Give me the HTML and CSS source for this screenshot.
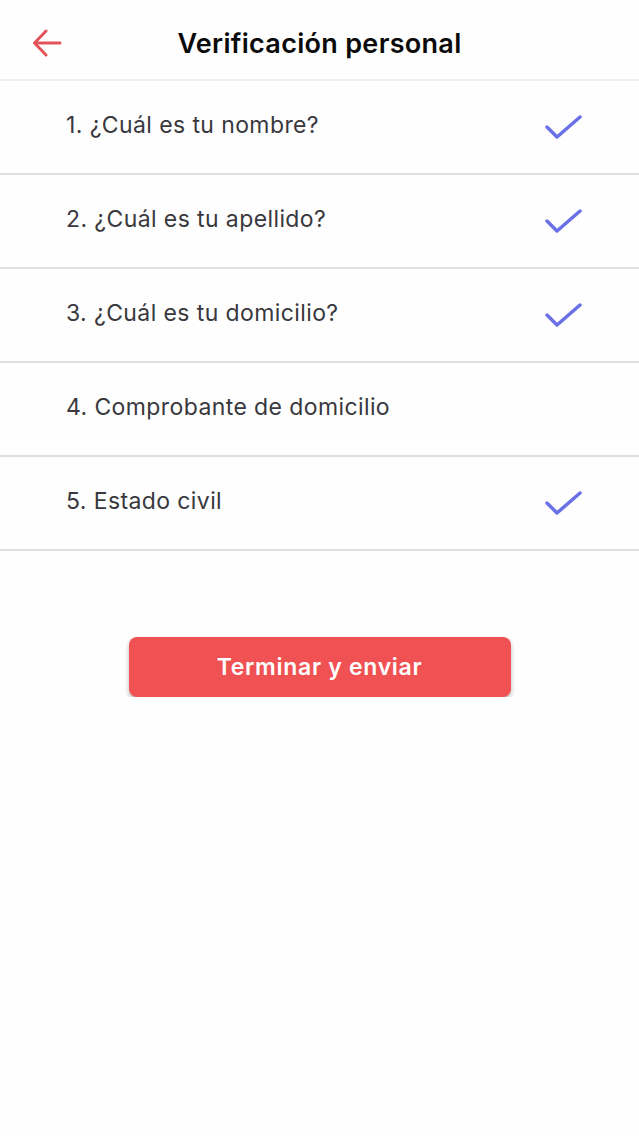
FILE: index.html
```html
<!DOCTYPE html>
<html lang="es">
<head>
    <meta charset="UTF-8">
    <meta name="viewport" content="width=device-width, initial-scale=1.0">
    <title>Verificación personal</title>
    <link rel="stylesheet" href="styles.css">
</head>
<body>
    <header class="top-bar">
        <a href="#" class="back-btn" aria-label="Volver">
            <svg width="30" height="28" viewBox="0 0 30 28" fill="none" stroke="#e2545a" stroke-width="3" stroke-linecap="round" stroke-linejoin="round">
                <path d="M28 14H3"/>
                <path d="M14 2L2.5 14L14 26"/>
            </svg>
        </a>
        <h1>Verificación personal</h1>
    </header>
    <ul class="steps">
        <li class="step">
            <span>1. ¿Cuál es tu nombre?</span>
            <svg class="check" width="38" height="28" viewBox="0 0 38 28" fill="none" stroke="#6a70e6" stroke-width="3.5" stroke-linecap="round" stroke-linejoin="round"><path d="M2 14L12 24L35 4"/></svg>
        </li>
        <li class="step">
            <span>2. ¿Cuál es tu apellido?</span>
            <svg class="check" width="38" height="28" viewBox="0 0 38 28" fill="none" stroke="#6a70e6" stroke-width="3.5" stroke-linecap="round" stroke-linejoin="round"><path d="M2 14L12 24L35 4"/></svg>
        </li>
        <li class="step">
            <span>3. ¿Cuál es tu domicilio?</span>
            <svg class="check" width="38" height="28" viewBox="0 0 38 28" fill="none" stroke="#6a70e6" stroke-width="3.5" stroke-linecap="round" stroke-linejoin="round"><path d="M2 14L12 24L35 4"/></svg>
        </li>
        <li class="step">
            <span>4. Comprobante de domicilio</span>
        </li>
        <li class="step">
            <span>5. Estado civil</span>
            <svg class="check" width="38" height="28" viewBox="0 0 38 28" fill="none" stroke="#6a70e6" stroke-width="3.5" stroke-linecap="round" stroke-linejoin="round"><path d="M2 14L12 24L35 4"/></svg>
        </li>
    </ul>
    <div class="actions">
        <button class="submit-btn">Terminar y enviar</button>
    </div>
</body>
</html>
```

FILE: styles.css
```css
body {
    font-family: Inter, "Noto Sans", sans-serif;
    background-color: #fefefe;
    margin: 0;
    padding: 0;
}
.top-bar {
    height: 71px;
    padding-top: 8px;
    display: flex;
    align-items: center;
    justify-content: center;
    position: relative;
    border-bottom: 2px solid #efefef;
}
.top-bar h1 {
    margin: 0;
    font-size: 27px;
    font-weight: 600;
    letter-spacing: 0.3px;
    color: #0a0a0a;
}
.back-btn {
    position: absolute;
    left: 32px;
    top: 29px;
    display: flex;
}
.steps {
    list-style: none;
    margin: 0;
    padding: 0;
}
.step {
    height: 92px;
    display: flex;
    align-items: center;
    justify-content: space-between;
    padding: 0 56px 0 66px;
    border-bottom: 2px solid #e0e0e0;
    font-size: 23px;
    letter-spacing: 0.4px;
    color: #38383d;
}
.step span {
    margin-top: -4px;
}
.actions {
    display: flex;
    justify-content: center;
    padding-top: 86px;
}
.submit-btn {
    width: 382px;
    height: 60px;
    border: none;
    border-radius: 8px;
    background-color: #f05253;
    color: #fff;
    font-family: inherit;
    font-size: 23px;
    font-weight: 600;
    letter-spacing: 0.7px;
    box-shadow: 0 3px 5px rgba(0, 0, 0, 0.28);
    cursor: pointer;
}
```
